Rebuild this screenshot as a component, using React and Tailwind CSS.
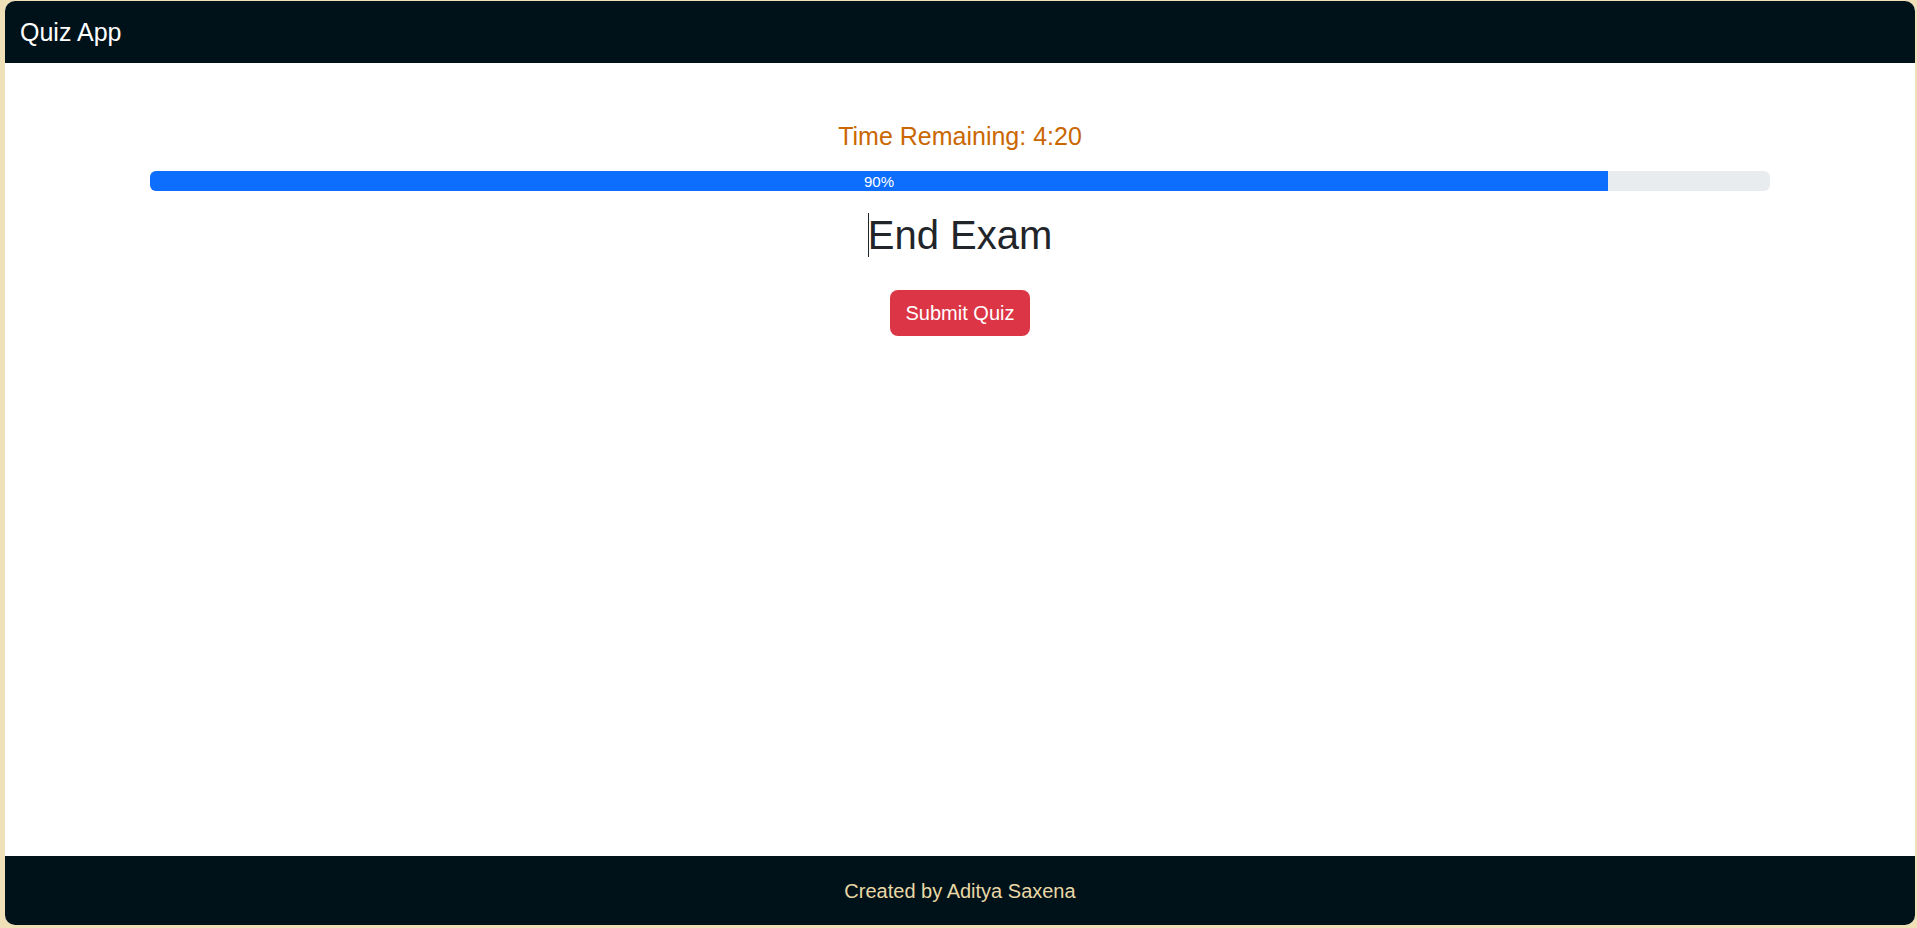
export default function App() {
  return (
    <div
      className="w-full h-[928px] bg-[#efe0b8] pt-px pl-[5px] pr-[2px] pb-[3px]"
      style={{ fontFamily: '"Liberation Sans", Arial, sans-serif' }}
    >
      <div className="h-full flex flex-col bg-white rounded-[10px] overflow-hidden">
        <header className="h-[62px] shrink-0 bg-[#001219] flex items-center px-[15px]">
          <span className="text-white text-[25px] leading-none">Quiz App</span>
        </header>
        <main className="flex-1 flex flex-col items-center pt-[55px] px-[145px]">
          <div className="text-[#ca6702] text-[25px] leading-[36px]">Time Remaining: 4:20</div>
          <div className="w-full h-[20px] mt-[17px] bg-[#e9ecef] rounded-[6px] overflow-hidden flex">
            <div className="h-full w-[90%] bg-[#0d6efd] flex items-center justify-center text-white text-[15px] leading-none">
              90%
            </div>
          </div>
          <h1 className="mt-[20px] text-[40px] leading-[48px] text-[#212529] flex items-center">
            <span className="inline-block w-px h-[44px] bg-[#212529] mr-[-1px]"></span>
            <span>End Exam</span>
          </h1>
          <button className="mt-[31px] h-[46px] px-[16px] bg-[#dc3545] text-white text-[20px] rounded-[8px]">
            Submit Quiz
          </button>
        </main>
        <footer className="h-[69px] shrink-0 bg-[#001219] flex items-center justify-center">
          <span className="text-[#e9d8a6] text-[20px]">Created by Aditya Saxena</span>
        </footer>
      </div>
    </div>
  );
}
